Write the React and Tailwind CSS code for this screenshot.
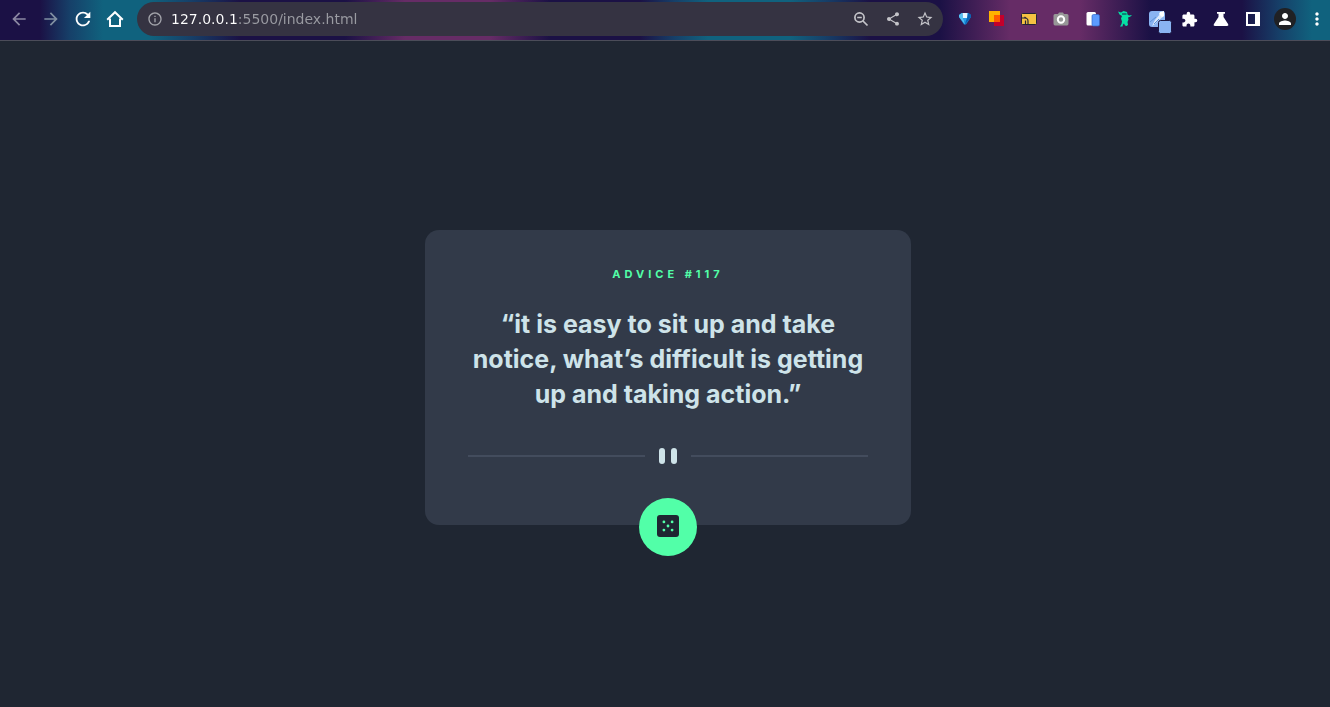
import React from "react";
import {
  MdArrowBack,
  MdArrowForward,
  MdRefresh,
  MdInfoOutline,
  MdShare,
  MdStarBorder,
  MdExtension,
  MdMoreVert,
  MdPerson,
} from "react-icons/md";

function IconButton({ label, children, className = "w-8" }) {
  return (
    <button
      type="button"
      aria-label={label}
      className={"flex h-8 shrink-0 items-center justify-center " + className}
    >
      {children}
    </button>
  );
}

function HomeIcon() {
  return (
    <svg width="20" height="20" viewBox="0 0 20 20" fill="none" stroke="#fff" strokeWidth="2">
      <path d="M5 9.5V17h10V9.5" />
      <path d="M2.2 10.8L10 3.2l7.8 7.6" />
    </svg>
  );
}

function ZoomOutIcon() {
  return (
    <svg width="16" height="16" viewBox="0 0 16 16" fill="none" stroke="#c4c4c9" strokeWidth="1.700">
      <circle cx="6.500" cy="6.500" r="4.600" />
      <path d="M10 10l4.500 4.500M4.200 6.500h4.600" />
    </svg>
  );
}

function GemIcon() {
  return (
    <svg width="14" height="16" viewBox="0 0 14 16">
      <path d="M1 4L3.500 2h7L13 4v2L8 13.500H6L1 6z" fill="#1788d8" />
      <path d="M1 4l3-2 1 4.500L7 13.500 1 6z" fill="#56c1f2" />
      <path d="M13 4l-3-2-1 4.500-2 7L13 6z" fill="#0b62b4" />
      <path d="M4.500 2h5L9 7H5z" fill="#e8f8ff" />
      <path d="M5 7h4l-2 4z" fill="#2a9de6" />
    </svg>
  );
}

function OverlapIcon() {
  return (
    <svg width="16" height="16" viewBox="0 0 16 16">
      <path d="M0 0h11v11H0z" fill="#ffb300" />
      <path d="M5 4h10v11H5z" fill="#c4002b" />
      <path d="M5 4h6v7H5z" fill="#ff5a00" />
    </svg>
  );
}

function FolderIcon() {
  return (
    <svg width="16" height="12" viewBox="0 0 16 12">
      <rect x=".5" y=".5" width="15" height="11" rx="1" fill="#f5c242" stroke="#242436" />
      <path d="M1 5h2.500q3.500 0 3.500 3V12M4.500 12V7.500M3.500 4l2 1.500" stroke="#242436" strokeWidth="1.200" fill="none" />
    </svg>
  );
}

function CameraIcon() {
  return (
    <svg width="16" height="14" viewBox="0 0 16 14">
      <path d="M5 2L6 .5h4L11 2h3q1.500 0 1.500 1.500v8Q15.500 13.500 14 13.500H2Q.5 13.500.5 11.500v-8Q.5 2 2 2z" fill="#979797" />
      <circle cx="8" cy="7.500" r="3.200" fill="#979797" stroke="#fff" strokeWidth="2" />
    </svg>
  );
}

function PagesIcon() {
  return (
    <svg width="14" height="16" viewBox="0 0 14 16">
      <rect x=".5" y="1" width="9.500" height="13.500" rx="1.500" fill="#fff" />
      <rect x="6" y="3.500" width="7.500" height="11.500" rx="1.500" fill="#5c9bff" stroke="#2f67c8" strokeWidth=".7" />
    </svg>
  );
}

function CreatureIcon() {
  return (
    <svg width="16" height="18" viewBox="0 0 16 18" fill="#06dfa5">
      <path d="M1 1.500l3 1L6.500 1 10 2l.5 2.500L12 5.500l3-.5-1.500 1.500-2.500 1L11.500 9.500 10.500 12l.5 3-1.500 1-1.500-.5-1-2-1 1L5.500 16.500H3L4.500 14 5 11.500 4 8.500 5 6 2.500 4.500z" />
      <path d="M5 4h4.500" stroke="#14234b" strokeWidth="1" />
    </svg>
  );
}

function TilesIcon() {
  return (
    <svg width="24" height="24" viewBox="0 0 24 24" className="overflow-visible">
      <rect x="4" y="2" width="16" height="16" rx="3" fill="#8ab4f3" />
      <path d="M7 17l3-6 5-6 3-2 1 4-5 4-4 4z" fill="#dceafc" />
      <path d="M15 3l4-1v5l-2 1-3-3z" fill="#fff" />
      <path d="M5 13l6-5M9 15l5-5" stroke="#5c91d8" strokeWidth="1" />
      <rect x="13.500" y="11.500" width="13" height="13" rx="2" fill="#8ab4f3" stroke="#1c1742" />
    </svg>
  );
}

function FlaskIcon() {
  return (
    <svg width="16" height="16" viewBox="0 0 16 16" fill="#fff">
      <path d="M4 1h8v1.800h-1.500V6l4.700 7.200Q16 15 14 15H2Q0 15 .8 13.200L5.500 6V2.800H4z" />
    </svg>
  );
}

function PanelIcon() {
  return (
    <svg width="14" height="14" viewBox="0 0 14 14">
      <path d="M0 0h14v14H0zM2 2v10h7V2z" fill="#fff" fillRule="evenodd" />
    </svg>
  );
}

function DiceIcon() {
  return (
    <svg width="22" height="22" viewBox="0 0 22 22">
      <rect width="22" height="22" rx="3" fill="#1f2632" />
      <g fill="#52ffa8">
        <circle cx="6.900" cy="6.900" r="1.400" />
        <circle cx="15.100" cy="6.900" r="1.400" />
        <circle cx="11" cy="11" r="1.400" />
        <circle cx="6.900" cy="15.100" r="1.400" />
        <circle cx="15.100" cy="15.100" r="1.400" />
      </g>
    </svg>
  );
}

function Toolbar() {
  return (
    <header className="flex h-[41px] items-center border-b border-[#4b4c59] bg-[linear-gradient(90deg,#1b1145_0px,#1b1145_40px,#164069_70px,#10627e_103px,#10627e_150px,#164069_190px,#1b1145_240px,#1b1145_345px,#662c66_405px,#662c66_490px,#1b1145_550px,#1b1145_640px,#164069_675px,#10627e_708px,#10627e_790px,#164069_825px,#1b1145_870px,#1b1145_940px,#662c66_1010px,#662c66_1080px,#1b1145_1150px,#1b1145_1242px,#164069_1280px,#10627e_1312px)] pb-[2px] pl-[3px]">
      <nav aria-label="Navigation" className="flex text-white">
        <IconButton label="Back"><MdArrowBack size={20} color="#8b88a2" /></IconButton>
        <IconButton label="Forward"><MdArrowForward size={20} color="#8090a2" /></IconButton>
        <IconButton label="Reload"><MdRefresh size={22} /></IconButton>
        <IconButton label="Home"><HomeIcon /></IconButton>
      </nav>
      <div className="mx-[6px] flex h-[34px] min-w-0 flex-1 items-center rounded-full bg-[#353342] pl-[10px] pr-[2px] text-[#c4c4c9]">
        <MdInfoOutline size={16} color="#a3a4ab" className="shrink-0" />
        <input
          aria-label="Address"
          defaultValue="127.0.0.1:5500/index.html"
          className="ml-2 min-w-0 flex-1 bg-[linear-gradient(90deg,#ffffff_66px,#9a9ba2_66px)] bg-clip-text font-['DejaVu_Sans',sans-serif] text-sm text-transparent caret-white outline-none"
        />
        <IconButton label="Zoom"><ZoomOutIcon /></IconButton>
        <IconButton label="Share"><MdShare size={16} /></IconButton>
        <IconButton label="Bookmark"><MdStarBorder size={18} /></IconButton>
      </div>
      <div className="flex shrink-0 text-white">
        <IconButton label="Gem extension"><GemIcon /></IconButton>
        <IconButton label="Layers extension"><OverlapIcon /></IconButton>
        <IconButton label="Folder extension"><FolderIcon /></IconButton>
        <IconButton label="Screenshot extension"><CameraIcon /></IconButton>
        <IconButton label="Pages extension"><PagesIcon /></IconButton>
        <IconButton label="Creature extension"><CreatureIcon /></IconButton>
        <IconButton label="Tiles extension" className="w-8 pt-[4px]"><TilesIcon /></IconButton>
        <IconButton label="Extensions"><MdExtension size={17} /></IconButton>
        <IconButton label="Experiments"><FlaskIcon /></IconButton>
        <IconButton label="Side panel"><PanelIcon /></IconButton>
        <IconButton label="Profile">
          <span className="flex size-[22px] items-center justify-center rounded-full bg-[#202124]">
            <MdPerson size={18} />
          </span>
        </IconButton>
        <IconButton label="Menu" className="w-[29px] pl-[3px]"><MdMoreVert size={20} /></IconButton>
      </div>
    </header>
  );
}

export default function App() {
  return (
    <div className="flex min-h-screen flex-col bg-[#1f2632] font-['Inter',sans-serif]">
      <Toolbar />
      <main className="flex flex-1 items-center justify-center pl-[6px] pt-[7px]">
        <article className="flex w-full max-w-[486px] flex-col items-center rounded-[14px] bg-[#323a49] px-[43px] pt-[36px] text-center">
          <h1 className="text-[11px] font-bold leading-4 tracking-[4px] text-[#52ffa8]">ADVICE #117</h1>
          <p className="mt-[25px] text-[25px] font-bold leading-[35px] text-[#cee3e9]">
            “it is easy to sit up and take notice, what’s difficult is getting up and taking action.”
          </p>
          <div className="mt-[36px] flex w-full items-center gap-[14px]">
            <span className="h-[2px] flex-1 bg-[#434c5d]" />
            <span className="flex gap-[6px]">
              <span className="h-4 w-[6px] rounded-full bg-[#cee3e9]" />
              <span className="h-4 w-[6px] rounded-full bg-[#cee3e9]" />
            </span>
            <span className="h-[2px] flex-1 bg-[#434c5d]" />
          </div>
          <button
            type="button"
            aria-label="New advice"
            className="-mb-[31px] mt-[34px] flex size-[58px] items-center justify-center rounded-full bg-[#52ffa8] pb-[2px]"
          >
            <DiceIcon />
          </button>
        </article>
      </main>
    </div>
  );
}
